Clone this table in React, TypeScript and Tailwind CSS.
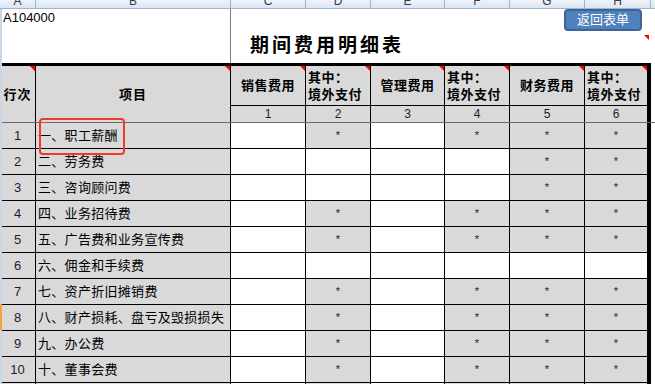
import React from 'react';

const cols = [
  { letter: 'A', w: 'w-[36px]' },
  { letter: 'B', w: 'w-[195px]' },
  { letter: 'C', w: 'w-[75px]' },
  { letter: 'D', w: 'w-[65px]' },
  { letter: 'E', w: 'w-[74px]' },
  { letter: 'F', w: 'w-[65px]' },
  { letter: 'G', w: 'w-[75px]' },
  { letter: 'H', w: 'w-[66px]' },
];

const gridCols = 'grid grid-cols-[36px_195px_75px_65px_74px_65px_75px_63px]';

// s = grey cell with *, w = white input cell
const starred = ['w', 's', 'w', 's', 's', 's'];
const rows = [
  { no: '1', name: '一、职工薪酬', cells: starred },
  { no: '2', name: '二、劳务费', cells: ['w', 'w', 'w', 'w', 's', 's'] },
  { no: '3', name: '三、咨询顾问费', cells: ['w', 'w', 'w', 'w', 's', 's'] },
  { no: '4', name: '四、业务招待费', cells: starred },
  { no: '5', name: '五、广告费和业务宣传费', cells: starred },
  { no: '6', name: '六、佣金和手续费', cells: ['w', 'w', 'w', 'w', 'w', 'w'] },
  { no: '7', name: '七、资产折旧摊销费', cells: starred },
  { no: '8', name: '八、财产损耗、盘亏及毁损损失', cells: starred },
  { no: '9', name: '九、办公费', cells: starred },
  { no: '10', name: '十、董事会费', cells: starred },
  { no: '11', name: '十一、租赁费', cells: starred },
];

const font = { fontFamily: '"Liberation Sans", "Noto Sans CJK SC", sans-serif' };

function Flag() {
  return (
    <span className="absolute right-0 top-0 h-0 w-0 border-l-[5px] border-t-[5px] border-l-transparent border-t-[#ff0000]" />
  );
}

function HeadCell({ children, className = '' }: { children?: React.ReactNode; className?: string }) {
  return (
    <div className={`relative border-r border-b border-black bg-[#d9d9d9] text-[13px] font-bold text-black ${className}`}>
      {children}
      <Flag />
    </div>
  );
}

function SplitHead() {
  return (
    <HeadCell className="flex flex-col justify-center pl-[2px] leading-[17px] tracking-[0.5px]">
      <span>其中：</span>
      <span>境外支付</span>
    </HeadCell>
  );
}

export default function App() {
  return (
    <div className="relative h-[384px] w-[655px] overflow-hidden bg-white" style={font}>
      {/* column letters */}
      <div className="flex h-[9px] overflow-hidden border-b border-[#9eb6ce] bg-gradient-to-b from-[#eef3fa] to-[#dbe5f1]">
        {cols.map((c) => (
          <div
            key={c.letter}
            className={`${c.w} shrink-0 border-r border-[#9eb6ce] text-center text-[12px] leading-[12px] text-[#3b3b3b]`}
          >
            <div className="-mt-[5px]">{c.letter}</div>
          </div>
        ))}
        <div className="flex-1" />
      </div>

      {/* title area */}
      <div className="flex h-[54px]">
        <div className="w-[231px] shrink-0 border-r border-[#7f7f7f] pl-[3px] pt-[1px] text-[13px] leading-[15px] text-black">
          A104000
        </div>
        <div className="relative flex flex-1 items-end pb-[7px] pl-[19px]">
          <span className="text-[19px] font-bold leading-[20px] tracking-[3px] text-black">期间费用明细表</span>
          <div className="absolute right-[13px] top-0 flex h-[22px] w-[78px] items-center justify-center rounded-[4px] border-2 border-[#3e6595] bg-[#4f81bd] text-[13px] text-white">
            返回表单
          </div>
          <span className="absolute right-[6px] top-[26px] h-0 w-0 border-l-[5px] border-t-[5px] border-l-transparent border-t-[#ff0000]" />
        </div>
      </div>

      {/* header */}
      <div className={`${gridCols} w-[651px] border-t-[3px] border-r-[3px] border-black`}>
        <HeadCell className="row-span-2 flex items-center justify-center border-b-0 pt-[1px]">
          <Flag />
          <span className="tracking-[1px]">行次</span>
        </HeadCell>
        <HeadCell className="row-span-2 flex items-center justify-center border-b-0 pt-[1px]">
          <span className="tracking-[1px]">项目</span>
        </HeadCell>
        <HeadCell className="flex h-[40px] items-center justify-center tracking-[0.5px]">销售费用</HeadCell>
        <SplitHead />
        <HeadCell className="flex items-center justify-center tracking-[0.5px]">管理费用</HeadCell>
        <SplitHead />
        <HeadCell className="flex items-center justify-center tracking-[0.5px]">财务费用</HeadCell>
        <SplitHead />
        {['1', '2', '3', '4', '5', '6'].map((n) => (
          <div key={n} className="flex h-[16px] items-center justify-center border-r border-black bg-[#d9d9d9] text-[12px] text-[#1a1a3a]">
            {n}
          </div>
        ))}
      </div>
      <div className="h-px w-full bg-[#6b6b6b]" />

      {/* body */}
      <div className={`${gridCols} w-[651px] border-r-[3px] border-black`}>
        {rows.map((r) => (
          <React.Fragment key={r.no}>
            <div className="flex h-[26px] items-center justify-center border-r border-b border-black bg-[#d9d9d9] text-[13px] text-[#1a1a3a]">
              {r.no}
            </div>
            <div className="flex items-center border-r border-b border-black bg-[#d9d9d9] pl-[2px] text-[13px] tracking-[0.3px] text-black">
              {r.name}
            </div>
            {r.cells.map((c, i) => (
              <div
                key={i}
                className={`flex items-center justify-center border-r border-b border-black text-[11px] text-[#222] ${
                  c === 's' ? 'bg-[#d9d9d9]' : 'bg-white'
                }`}
              >
                {c === 's' ? '*' : ''}
              </div>
            ))}
          </React.Fragment>
        ))}
      </div>

      {/* row-header edge */}
      <div className="absolute left-0 top-[9px] flex h-[375px] w-[2px] flex-col bg-[#c9d6e6]">
        <div className="h-[295px]" />
        <div className="h-[26px] bg-[#f5a33b]" />
      </div>

      {/* highlight box */}
      <div className="absolute left-[39px] top-[118px] h-[37px] w-[86px] rounded-[4px] border-2 border-[#f2382b]" />
    </div>
  );
}
